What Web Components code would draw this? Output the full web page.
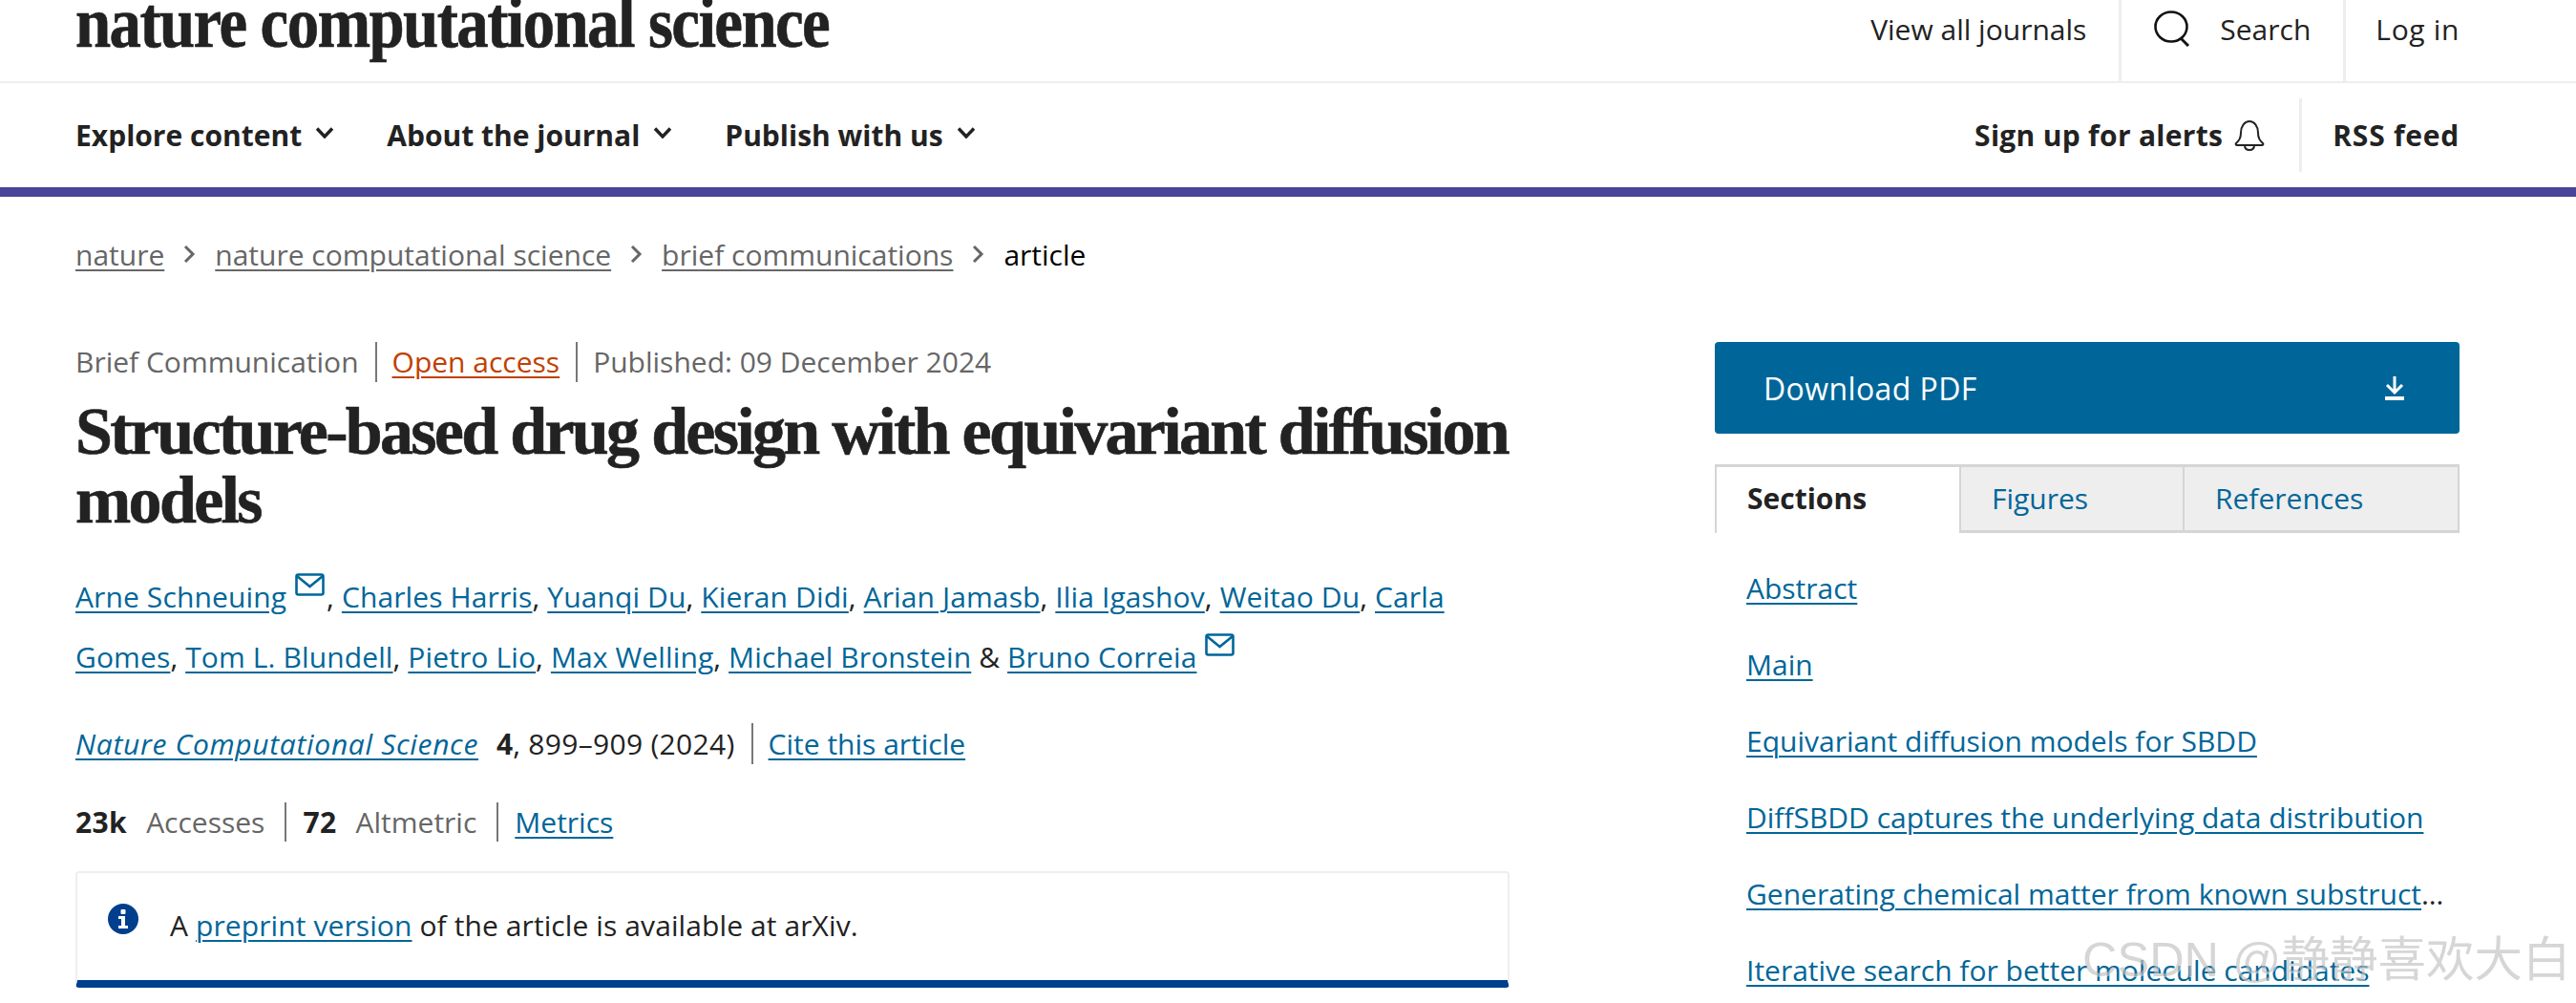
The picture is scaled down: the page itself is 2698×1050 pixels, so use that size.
<!DOCTYPE html>
<html lang="en"><head><meta charset="utf-8"><title>Structure-based drug design with equivariant diffusion models</title>
<style>
html,body{margin:0;padding:0;height:1050px;overflow:hidden;background:#fff}
body{font-family:"Open Sans","Noto Sans",sans-serif;font-size:30px;letter-spacing:0;color:#222;position:relative}
</style></head><body>
<top-bar></top-bar>
<main-nav></main-nav>
<bread-crumbs></bread-crumbs>
<article-layout>
  <article-head slot="main"></article-head>
  <side-panel slot="side"></side-panel>
</article-layout>
<water-mark>CSDN @静静喜欢大白</water-mark>
<script>
function def(name,html){customElements.define(name,class extends HTMLElement{constructor(){super();this.attachShadow({mode:'open'}).innerHTML=html}})}
const chev='<svg width="20" height="12" viewBox="0 0 20 12" fill="none" stroke="#222" stroke-width="3.4"><path d="M2 1.5l8 8.5 8-8.5"/></svg>';
function sep(){return '<svg width="13" height="20" viewBox="0 0 13 20" fill="none" stroke="#666" stroke-width="3"><path d="M2 2l8 8-8 8"/></svg>'}
const mail='<svg width="31" height="24" viewBox="0 0 31 24" fill="none" stroke="#069" stroke-width="2.6"><rect x="1.5" y="1.5" width="28" height="21" rx="2"/><path d="M2 3l13.5 11L29 3"/></svg>';
def('top-bar',`<style>
:host{display:flex;height:85px;border-bottom:2px solid #eee;padding:0 122px 0 79px;justify-content:space-between}
.logo{font:700 76px/46px "Liberation Serif",serif;letter-spacing:-1.85px;color:#222;white-space:nowrap;align-self:flex-start;transform:scaleX(.88);transform-origin:0 50%;-webkit-text-stroke:.6px #222}
nav{display:flex;line-height:62px}
a{display:flex;align-items:flex-start;color:#222;padding:0 34px}
a+a{border-left:3px solid #eee}
a:last-child{padding:0 0 0 31px;letter-spacing:.65px}
svg{margin:11px 30px 0 0}
</style><div class="logo">nature computational science</div>
<nav><a>View all journals</a><a><svg width="39" height="38" viewBox="0 0 39 38" fill="none" stroke="#111" stroke-width="2.6"><ellipse cx="18" cy="17" rx="16.5" ry="15.5"/><path d="M28 29l8 8" stroke-width="3"/></svg>Search</a><a>Log in</a></nav>`);
def('main-nav',`<style>
:host{display:flex;height:109px;border-bottom:10px solid #4b4597;padding:0 122px 0 79px;justify-content:space-between;align-items:center;font-weight:700}
div{display:flex;align-items:center}
.l span{display:flex;align-items:center;gap:14px;margin-right:55px}
.l svg{margin-top:-6px}
.r a{display:flex;align-items:center;gap:11px;padding-right:35px;height:77px;letter-spacing:.3px}
.r a+a{border-left:3px solid #eee;padding:0 0 0 32px;letter-spacing:.75px}
</style><div class="l"><span>Explore content ${chev}</span><span>About the journal ${chev}</span><span>Publish with us ${chev}</span></div>
<div class="r"><a>Sign up for alerts <svg width="34" height="33" viewBox="0 0 34 33" fill="none" stroke="#222" stroke-width="2"><path d="M3 25c3-3 5-5 5-11 0-7 4-12 9-12s9 5 9 12c0 6 2 8 5 11 1 1 0 2-1 2H4c-1 0-2-1-1-2z"/><path d="M12 27c0 3 2 5 5 5s5-2 5-5"/></svg></a><a>RSS feed</a></div>`);
def('bread-crumbs',`<style>
:host{display:flex;align-items:center;height:98px;box-sizing:border-box;padding:22px 79px 0;color:#666;gap:20px}
a{color:#666;text-decoration:underline;text-underline-offset:4px;text-decoration-thickness:2px}
b{font-weight:400;color:#000}
</style><a>nature</a>${sep()}<a>nature computational science</a>${sep()}<a>brief communications</a>${sep()}<b>article</b>`);
def('article-layout',`<style>
:host{display:flex;justify-content:space-between;padding:54px 122px 0 79px;align-items:flex-start}
::slotted([slot=main]){width:1502px}
::slotted([slot=side]){width:780px}
</style><slot name="main"></slot><slot name="side"></slot>`);
def('article-head',`<style>
:host{display:block}
a{color:#069;text-decoration:underline;text-underline-offset:4px;text-decoration-thickness:2px}
.pipes{display:flex;align-items:center}
.pipes>*+*{border-left:2px solid #777;margin-left:17px;padding-left:16px}
.meta{height:42px;line-height:42px;color:#666}
.meta a{color:#c04000}
h1{font:700 70px/72px "Liberation Serif",serif;letter-spacing:-2.7px;margin:16px 0 0;color:#222;-webkit-text-stroke:.6px #222}
.authors{margin:33px 0 0;line-height:63px;letter-spacing:.12px}
.authors svg{vertical-align:12px;margin:0 2px 0 9px}
.jr{height:43px;line-height:43px;margin-top:38px}
.jr i{font-style:italic;letter-spacing:.68px}
.jr b{margin-left:19px}
.jr .n{letter-spacing:.3px}
.mt{height:41px;line-height:41px;margin-top:40px}
.mt>*+*{margin-left:21px;padding-left:17px}
.mt b{letter-spacing:.4px}
.mt span{color:#666;margin-left:20px}
</style>
<div class="pipes meta"><span>Brief Communication</span><span><a>Open access</a></span><span>Published: 09 December 2024</span></div>
<h1>Structure-based drug design with equivariant diffusion models</h1>
<p class="authors"><a>Arne Schneuing</a>${mail}, <a>Charles Harris</a>, <a>Yuanqi Du</a>, <a>Kieran Didi</a>, <a>Arian Jamasb</a>, <a>Ilia Igashov</a>, <a>Weitao Du</a>, <a>Carla</a> <a>Gomes</a>, <a>Tom L. Blundell</a>, <a>Pietro Lio</a>, <a>Max Welling</a>, <a>Michael Bronstein</a> &amp; <a>Bruno Correia</a>${mail}</p>
<div class="pipes jr"><span><a><i>Nature Computational Science</i></a><b>4</b><span class="n">, 899–909 (2024)</span></span><span><a>Cite this article</a></span></div>
<div class="pipes mt"><div><b>23k</b><span>Accesses</span></div><div><b>72</b><span>Altmetric</span></div><div><a>Metrics</a></div></div>
<info-notice></info-notice>`);
def('info-notice',`<style>
:host{display:flex;margin-top:31px;height:112px;border:2px solid #eee;border-bottom:8px solid #003f8d;border-radius:4px;padding:0 0 0 32px;align-items:flex-start;gap:33px;line-height:68px;letter-spacing:.1px}
svg{margin-top:32px;flex:none}
a{color:#069;text-decoration:underline;text-underline-offset:4px;text-decoration-thickness:2px}
div{margin-top:21px}
</style><svg width="32" height="32" viewBox="0 0 32 32"><circle cx="16" cy="16" r="16" fill="#003f8d"/><rect x="13.5" y="6" width="5" height="5" fill="#fff" rx="1"/><path d="M11 13h7v10h3v3H11v-3h3v-7h-3z" fill="#fff"/></svg><div>A <a>preprint version</a> of the article is available at arXiv.</div>`);
def('side-panel',`<style>
:host{display:block}
.dl{display:flex;height:96px;background:#069;color:#fff;border-radius:4px;align-items:center;justify-content:space-between;padding:0 57px 0 51px;font-size:32px;letter-spacing:.4px}
.tabs{display:flex;margin-top:32px;height:72px;color:#069;line-height:66px}
.tabs>*{border:solid #d5d5d5;border-width:3px 2px 3px 0;background:#eee;padding-left:32px;box-sizing:border-box}
.tabs .on{background:#fff;color:#222;font-weight:700;width:258px;border-bottom:0;border-left-width:2px}
.tabs .f{width:234px}
.tabs .r{flex:1}
ul{list-style:none;margin:18px 0 0;padding:0 0 0 33px}
li{height:80px;line-height:80px;white-space:nowrap}
a{color:#069;text-decoration:underline;text-underline-offset:4px;text-decoration-thickness:2px}
.cut{display:block;width:731px;overflow:hidden;text-overflow:ellipsis}
</style><div class="dl"><span>Download PDF</span><svg width="22" height="26" viewBox="0 0 22 26" fill="none" stroke="#fff" stroke-width="3"><path d="M11 1v16M3 10l8 8 8-8"/><path d="M1 24h20" stroke-width="4"/></svg></div>
<div class="tabs"><div class="on">Sections</div><div class="f">Figures</div><div class="r">References</div></div>
<ul><li><a>Abstract</a></li><li><a>Main</a></li><li><a>Equivariant diffusion models for SBDD</a></li><li><a>DiffSBDD captures the underlying data distribution</a></li><li class="cut"><a>Generating chemical matter from known substructures</a></li><li><a>Iterative search for better molecule candidates</a></li></ul>`);
def('water-mark',`<style>
:host{position:absolute;left:2181px;top:978px;font:50.5px/54px "Liberation Sans","Noto Sans CJK SC",sans-serif;letter-spacing:0;color:rgba(120,120,120,.3);text-shadow:1px 1px 0 rgba(255,255,255,.5);white-space:nowrap}
</style><slot></slot>`);
</script>
</body></html>
